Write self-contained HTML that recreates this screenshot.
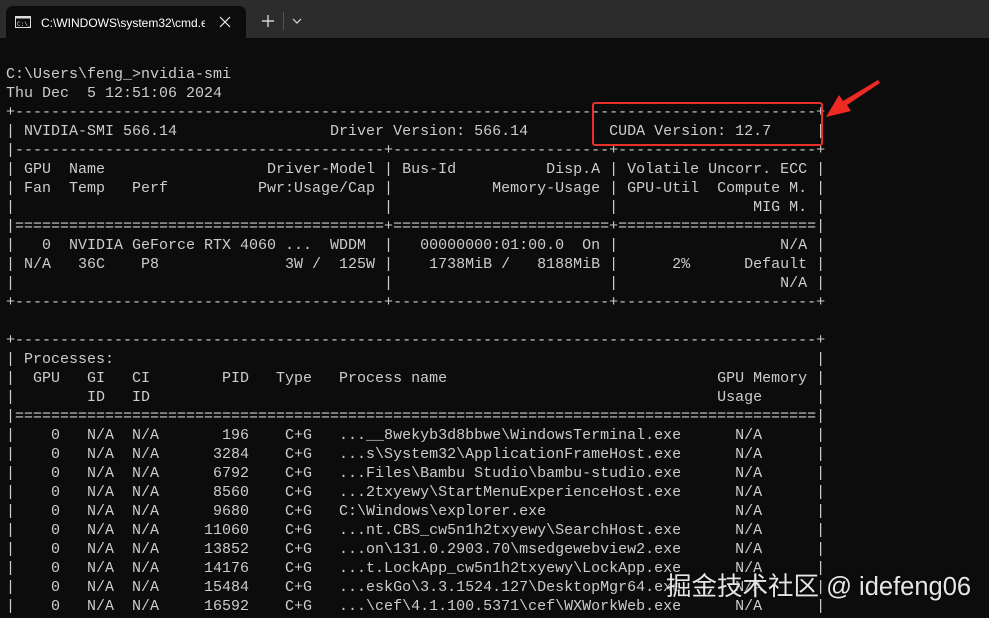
<!DOCTYPE html>
<html><head><meta charset="utf-8"><style>
body{margin:0;width:989px;height:618px;overflow:hidden;background:#0c0c0c;position:relative;font-family:"Liberation Sans",sans-serif}
.bar{position:absolute;left:0;top:0;width:989px;height:38px;background:#2c2c2c}
.tab{position:absolute;left:6px;top:6px;width:240px;height:32px;background:#0c0c0c;border-radius:7px 7px 0 0}
.tt{position:absolute;left:41px;top:16px;color:#fff;font-size:12px;width:164px;overflow:hidden;white-space:nowrap}
.term{position:absolute;left:6px;top:65px;margin:0;font:15px/19px "Liberation Mono",monospace;color:#cccccc;white-space:pre}
.box{position:absolute;left:592px;top:102px;width:227px;height:40px;border:2px solid #e8302a;border-radius:3px}
.wm{position:absolute;left:666px;top:566px;font:25.5px "Liberation Sans","Noto Sans CJK SC",sans-serif;color:#e6e6e6;white-space:nowrap;text-shadow:0 0 2px #000}
</style></head><body>
<div class="bar"></div>
<div class="tab"></div>
<svg style="position:absolute;left:15px;top:16px" width="16" height="12"><rect x="0.5" y="0.5" width="15" height="11" fill="none" stroke="#ddd"/><rect x="0.5" y="0.5" width="15" height="2" fill="#ddd"/><text x="2" y="10" font-size="6" fill="#ddd" font-family="Liberation Mono">C:\_</text></svg>
<div class="tt">C:\WINDOWS\system32\cmd.exe</div>
<svg style="position:absolute;left:219px;top:16px" width="12" height="12"><path d="M1 1L11 11M11 1L1 11" stroke="#eee" stroke-width="1.2"/></svg>
<svg style="position:absolute;left:262px;top:15px" width="12" height="12"><path d="M6 0V12M0 6H12" stroke="#eee" stroke-width="1.2"/></svg>
<div style="position:absolute;left:283px;top:12px;width:1px;height:18px;background:#555"></div>
<svg style="position:absolute;left:292px;top:18px" width="10" height="6"><path d="M1 1L5 5L9 1" stroke="#ddd" fill="none" stroke-width="1.2"/></svg>
<pre class="term">C:\Users\feng_&gt;nvidia-smi
Thu Dec  5 12:51:06 2024
+-----------------------------------------------------------------------------------------+
| NVIDIA-SMI 566.14                 Driver Version: 566.14         CUDA Version: 12.7     |
|-----------------------------------------+------------------------+----------------------+
| GPU  Name                  Driver-Model | Bus-Id          Disp.A | Volatile Uncorr. ECC |
| Fan  Temp   Perf          Pwr:Usage/Cap |           Memory-Usage | GPU-Util  Compute M. |
|                                         |                        |               MIG M. |
|=========================================+========================+======================|
|   0  NVIDIA GeForce RTX 4060 ...  WDDM  |   00000000:01:00.0  On |                  N/A |
| N/A   36C    P8              3W /  125W |    1738MiB /   8188MiB |      2%      Default |
|                                         |                        |                  N/A |
+-----------------------------------------+------------------------+----------------------+

+-----------------------------------------------------------------------------------------+
| Processes:                                                                              |
|  GPU   GI   CI        PID   Type   Process name                              GPU Memory |
|        ID   ID                                                               Usage      |
|=========================================================================================|
|    0   N/A  N/A       196    C+G   ...__8wekyb3d8bbwe\WindowsTerminal.exe      N/A      |
|    0   N/A  N/A      3284    C+G   ...s\System32\ApplicationFrameHost.exe      N/A      |
|    0   N/A  N/A      6792    C+G   ...Files\Bambu Studio\bambu-studio.exe      N/A      |
|    0   N/A  N/A      8560    C+G   ...2txyewy\StartMenuExperienceHost.exe      N/A      |
|    0   N/A  N/A      9680    C+G   C:\Windows\explorer.exe                     N/A      |
|    0   N/A  N/A     11060    C+G   ...nt.CBS_cw5n1h2txyewy\SearchHost.exe      N/A      |
|    0   N/A  N/A     13852    C+G   ...on\131.0.2903.70\msedgewebview2.exe      N/A      |
|    0   N/A  N/A     14176    C+G   ...t.LockApp_cw5n1h2txyewy\LockApp.exe      N/A      |
|    0   N/A  N/A     15484    C+G   ...eskGo\3.3.1524.127\DesktopMgr64.exe      N/A      |
|    0   N/A  N/A     16592    C+G   ...\cef\4.1.100.5371\cef\WXWorkWeb.exe      N/A      |</pre>
<div class="box"></div>
<svg style="position:absolute;left:820px;top:76px" width="64" height="46"><polygon points="58,4 60,7 27,29 31,35 6,41 19,19 23,25" fill="#ee2a22"/></svg>
<div class="wm">掘金技术社区 @ idefeng06</div>
</body></html>
